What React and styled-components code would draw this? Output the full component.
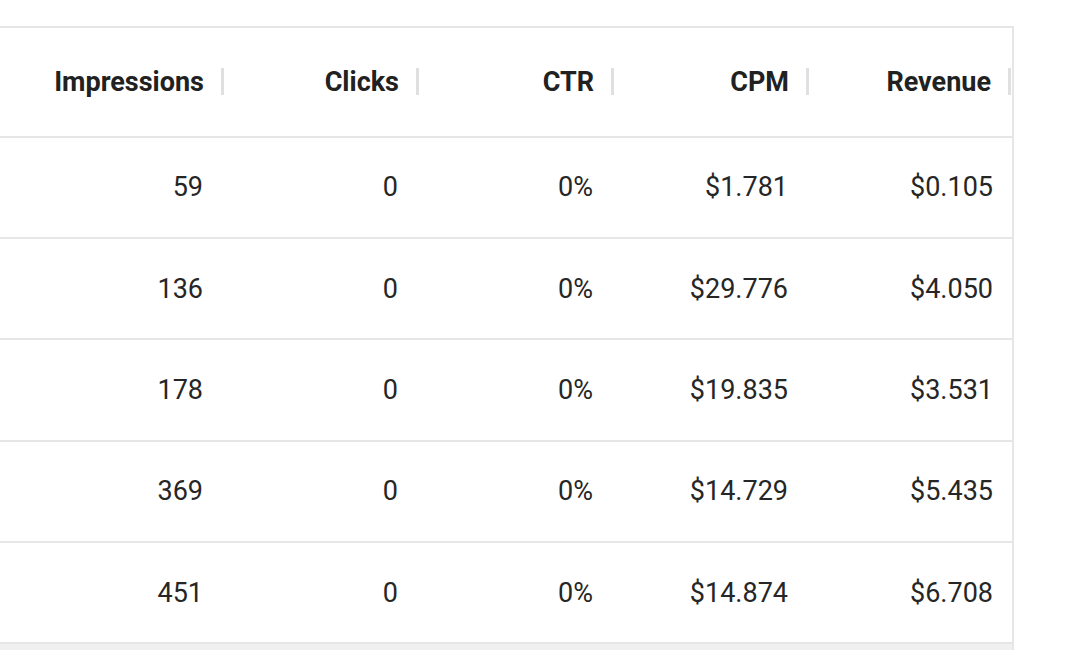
import styled, { createGlobalStyle } from 'styled-components';

const rows = [
  { impressions: '59', clicks: '0', ctr: '0%', cpm: '$1.781', revenue: '$0.105' },
  { impressions: '136', clicks: '0', ctr: '0%', cpm: '$29.776', revenue: '$4.050' },
  { impressions: '178', clicks: '0', ctr: '0%', cpm: '$19.835', revenue: '$3.531' },
  { impressions: '369', clicks: '0', ctr: '0%', cpm: '$14.729', revenue: '$5.435' },
  { impressions: '451', clicks: '0', ctr: '0%', cpm: '$14.874', revenue: '$6.708' },
];

const columns = [
  { key: 'impressions', title: 'Impressions' },
  { key: 'clicks', title: 'Clicks' },
  { key: 'ctr', title: 'CTR' },
  { key: 'cpm', title: 'CPM' },
  { key: 'revenue', title: 'Revenue' },
];

export default function App() {
  return (
    <>
      <GlobalStyle />
      <Grid>
        <HeaderRow>
          {columns.map((col) => (
            <HeaderCell key={col.key}>
              <span>{col.title}</span>
              <Separator />
            </HeaderCell>
          ))}
        </HeaderRow>
        {rows.map((row, i) => (
          <Row key={i}>
            {columns.map((col) => (
              <Cell key={col.key} $last={col.key === 'revenue'}>
                {row[col.key]}
              </Cell>
            ))}
          </Row>
        ))}
        <Footer />
      </Grid>
    </>
  );
}

const GlobalStyle = createGlobalStyle`
  html, body {
    margin: 0;
    padding: 0;
    background: #fff;
    font-family: Roboto, "Liberation Sans", sans-serif;
  }
`;

const lineColor = '#e6e6e6';

const Grid = styled.div`
  margin-top: 26px;
  width: 1012px;
  border-top: 2px solid ${lineColor};
  border-right: 2px solid ${lineColor};
  height: 622px;
  overflow: hidden;
  color: rgba(0, 0, 0, 0.87);
`;

const columnsTemplate = '225px 195px 195px 195px 202px';

const HeaderRow = styled.div`
  display: grid;
  grid-template-columns: ${columnsTemplate};
  height: 107.5px;
  border-bottom: 2px solid ${lineColor};
`;

const HeaderCell = styled.div`
  display: flex;
  align-items: center;
  justify-content: flex-end;
  padding-right: 1px;
  font-size: 27px;
  font-weight: 700;
  color: #212121;
  span {
    white-space: nowrap;
  }
`;

const Separator = styled.div`
  width: 3px;
  height: 27px;
  margin-left: 17px;
  background: #e0e0e0;
`;

const Row = styled.div`
  display: grid;
  grid-template-columns: ${columnsTemplate};
  height: 99.4px;
  border-bottom: 2px solid ${lineColor};
`;

const Cell = styled.div`
  display: flex;
  align-items: center;
  justify-content: flex-end;
  padding-right: ${(p) => (p.$last ? '19px' : '22px')};
  font-size: 27px;
  color: #262626;
`;

const Footer = styled.div`
  height: 20px;
  background: #f0f0f0;
`;
